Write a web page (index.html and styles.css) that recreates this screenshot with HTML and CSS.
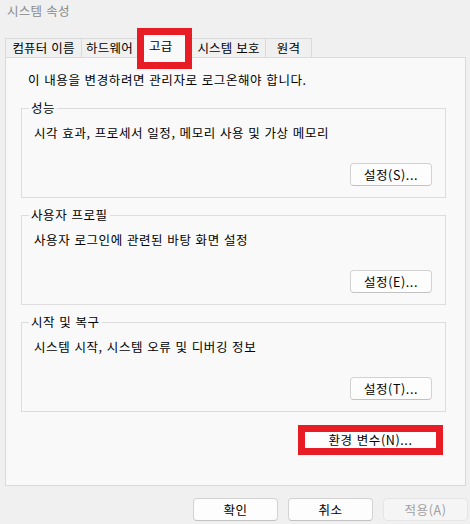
FILE: index.html
```html
<!DOCTYPE html>
<html lang="ko">
<head>
<meta charset="utf-8">
<title>시스템 속성</title>
<link rel="stylesheet" href="styles.css">
</head>
<body>
<div class="window">
  <div class="title">시스템 속성</div>
  <div class="tabs">
    <div class="tab t1">컴퓨터 이름</div>
    <div class="tab t2">하드웨어</div>
    <div class="tab t3 selected">고급<span class="mark"></span></div>
    <div class="tab t4">시스템 보호</div>
    <div class="tab t5">원격</div>
  </div>
  <div class="panel">
    <div class="note">이 내용을 변경하려면 관리자로 로그온해야 합니다.</div>
    <fieldset class="group first">
      <legend>성능</legend>
      <div class="desc">시각 효과, 프로세서 일정, 메모리 사용 및 가상 메모리</div>
      <div class="actions"><button class="btn">설정(S)...</button></div>
    </fieldset>
    <fieldset class="group">
      <legend>사용자 프로필</legend>
      <div class="desc">사용자 로그인에 관련된 바탕 화면 설정</div>
      <div class="actions"><button class="btn">설정(E)...</button></div>
    </fieldset>
    <fieldset class="group">
      <legend>시작 및 복구</legend>
      <div class="desc">시스템 시작, 시스템 오류 및 디버깅 정보</div>
      <div class="actions"><button class="btn">설정(T)...</button></div>
    </fieldset>
    <div class="env-row"><div class="env">환경 변수(N)...</div></div>
  </div>
  <div class="footer">
    <button class="btn wide">확인</button>
    <button class="btn wide">취소</button>
    <button class="btn wide disabled">적용(A)</button>
  </div>
</div>
</body>
</html>
```

FILE: styles.css
```css
* { box-sizing: border-box; }
html, body {
  margin: 0;
  padding: 0;
  background: #f0f0f0;
}
body {
  font-family: "Noto Sans CJK KR", "Noto Sans", sans-serif;
  font-size: 12.5px;
  letter-spacing: 0.6px;
  color: #000;
  width: 470px;
  overflow: hidden;
}
.window { width: 470px; }
.title {
  height: 34px;
  padding: 3px 0 0 7px;
  line-height: 16px;
  color: #8a8a8a;
  letter-spacing: 0.3px;
}
.tabs {
  position: relative;
  z-index: 2;
  display: flex;
  align-items: flex-end;
  height: 24px;
  margin-left: 5px;
}
.tab {
  height: 19px;
  margin-bottom: 1px;
  border: 1px solid #dadada;
  border-bottom: none;
  border-left: none;
  background: #f0f0f0;
  line-height: 17px;
  text-align: center;
  white-space: nowrap;
  letter-spacing: 0.2px;
}
.t1 { width: 77px; border-left: 1px solid #dadada; }
.t2 { width: 56px; }
.t3 { width: 54px; }
.t4 { width: 74px; }
.t5 { width: 46px; }
.tab.selected {
  position: relative;
  height: 24px;
  margin-bottom: 0;
  background: #f9f9f9;
  line-height: 22px;
  text-align: left;
  padding-left: 11px;
}
.mark {
  position: absolute;
  left: -1px;
  top: -7px;
  width: 55px;
  height: 41px;
  border: 7px solid #e81c24;
}
.panel {
  width: 461px;
  height: 429px;
  margin: -1px 0 0 5px;
  border: 1px solid #dadada;
  background: #f9f9f9;
  padding: 14px 19px 0 15px;
}
.note {
  margin-left: 7px;
  line-height: 16px;
}
.group {
  width: 425px;
  margin: 9px 0 0 0;
  padding: 0 13px 11px 12px;
  border: 1px solid #dcdcdc;
  min-width: 0;
}
.group.first { margin-top: 12px; }
.group legend {
  margin-left: -5px;
  padding: 0 2px;
  line-height: 16px;
}
.desc {
  margin-top: 9px;
  line-height: 16px;
}
.actions {
  display: flex;
  justify-content: flex-end;
  margin-top: 22px;
}
.btn {
  width: 82px;
  height: 23px;
  padding: 0;
  border: 1px solid #d2d2d2;
  border-bottom-color: #c2c2c2;
  border-radius: 4px;
  background: #fdfdfd;
  font-family: inherit;
  font-size: 12.5px;
  letter-spacing: 0.6px;
  line-height: 21px;
  color: #000;
  text-align: center;
}
.env-row {
  display: flex;
  justify-content: flex-end;
  margin-top: 13px;
  padding-right: 3px;
}
.env {
  width: 145px;
  height: 30px;
  border: 7px solid #e81c24;
  background: #fdfdfd;
  line-height: 16px;
  text-align: center;
}
.footer {
  display: flex;
  justify-content: flex-end;
  gap: 10px;
  margin-top: 12px;
  padding-right: 2px;
}
.btn.wide { width: 85px; }
.btn.disabled {
  background: #f5f5f5;
  border-color: #e5e5e5;
  color: #a0a0a0;
}
```
